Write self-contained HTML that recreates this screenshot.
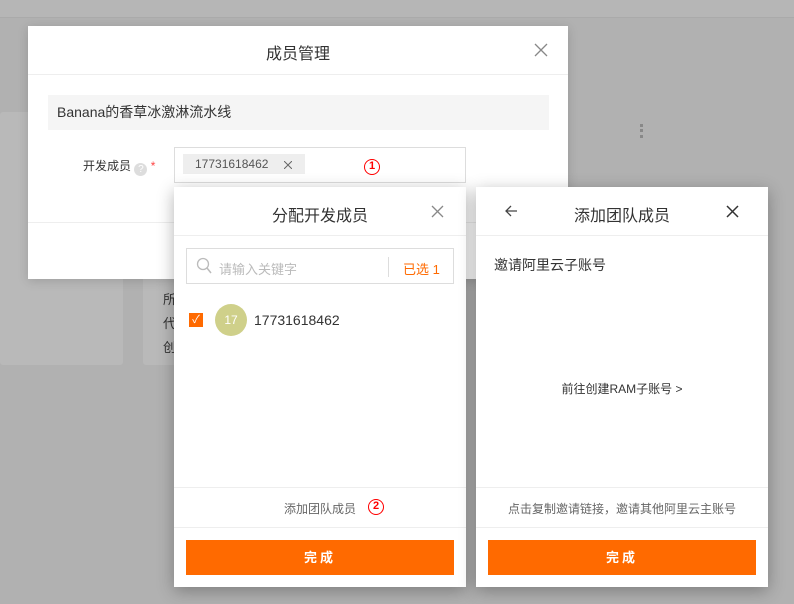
<!DOCTYPE html><html><head><meta charset="utf-8"><style>
*{box-sizing:border-box;margin:0;padding:0}
body{width:794px;height:604px;background:#b1b1b1;font-family:"Liberation Sans","Noto Sans CJK SC",sans-serif;position:relative;overflow:hidden;color:#333}
.a{position:absolute}
.top{left:0;top:0;width:794px;height:18px;background:#b6b6b6;border-bottom:1px solid #aaa}
.card{background:#b9b9b9;border-radius:3px}
.w{background:#fff}
.t{font-size:16px;color:#333}
.line{height:1px;background:#eee}
.btn{background:#ff6a00;color:#fff;font-size:13px;letter-spacing:3px;text-align:center;line-height:35px;font-weight:bold}
.red{color:#f00;border:1.5px solid #f00;border-radius:50%;width:16px;height:16px;font-size:11px;text-align:center;line-height:13px;font-weight:bold}
</style></head><body>
<div class="a top"></div>
<div class="a card" style="left:0;top:112px;width:123px;height:253px"></div>
<div class="a card" style="left:143px;top:112px;width:287px;height:253px"></div>
<div class="a" style="left:163px;top:288px;font-size:13px;line-height:24px;color:#333">所<br>代<br>创</div>
<div class="a" style="left:640px;top:124px;width:3px;height:14px;border-left:3px dotted #888"></div>
<div class="a" style="left:434px;top:235px;width:4px;height:35px;border:1px solid #f0b080;border-left:none"></div>

<div class="a w" style="left:28px;top:26px;width:540px;height:253px;box-shadow:0 2px 10px rgba(0,0,0,.15)">
 <div class="a t" style="left:0;width:540px;top:14px;text-align:center">成员管理</div>
 <svg class="a" style="left:506px;top:17px" width="14" height="14"><path d="M1 1L13 13M13 1L1 13" stroke="#888" stroke-width="1.3"/></svg>
 <div class="a line" style="left:0;top:48px;width:540px"></div>
 <div class="a" style="left:20px;top:69px;width:501px;height:35px;background:#f5f5f5;font-size:14px;line-height:35px;padding-left:9px">Banana的香草冰激淋流水线</div>
 <div class="a" style="left:55px;top:131px;font-size:12px">开发成员 <span style="display:inline-block;width:13px;height:13px;border-radius:50%;background:#ddd;color:#fff;font-size:10px;text-align:center;line-height:13px;vertical-align:-2px">?</span> <span style="color:#f44">*</span></div>
 <div class="a" style="left:146px;top:121px;width:292px;height:36px;border:1px solid #ddd">
  <div class="a" style="left:8px;top:6px;width:122px;height:20px;background:#eee;font-size:12px;line-height:20px;padding-left:12px;color:#555">17731618462</div>
  <svg class="a" style="left:109px;top:13px" width="8" height="8"><path d="M0 0L8 8M8 0L0 8" stroke="#666" stroke-width="1"/></svg>
  <div class="a red" style="left:189px;top:11px">1</div>
 </div>
 <div class="a line" style="left:0;top:196px;width:540px"></div>
</div>

<div class="a w" style="left:174px;top:187px;width:292px;height:400px;box-shadow:0 4px 16px rgba(0,0,0,.3)">
 <div class="a t" style="left:0;width:292px;top:15px;text-align:center">分配开发成员</div>
 <svg class="a" style="left:257px;top:18px" width="13" height="13"><path d="M1 1L12 12M12 1L1 12" stroke="#888" stroke-width="1.3"/></svg>
 <div class="a line" style="left:0;top:48px;width:292px"></div>
 <div class="a" style="left:12px;top:61px;width:268px;height:36px;border:1px solid #ddd">
  <svg class="a" style="left:9px;top:8px" width="16" height="18" viewBox="0 0 16 18"><circle cx="7" cy="7" r="5.5" fill="none" stroke="#bbb" stroke-width="1.3"/><path d="M11 11l4 5" stroke="#bbb" stroke-width="1.5"/></svg>
  <div class="a" style="left:32px;top:10px;font-size:13px;color:#bbb">请输入关键字</div>
  <div class="a" style="left:201px;top:8px;width:1px;height:20px;background:#ddd"></div>
  <div class="a" style="left:216px;top:10px;font-size:13px;color:#ff6a00">已选 1</div>
 </div>
 <div class="a" style="left:15px;top:126px;width:14px;height:14px;background:#ff6a00;color:#fff;font-size:11px;text-align:center;line-height:14px">✓</div>
 <div class="a" style="left:41px;top:117px;width:32px;height:32px;border-radius:50%;background:#cfd08a;color:#fff;font-size:12px;text-align:center;line-height:32px">17</div>
 <div class="a" style="left:80px;top:125px;font-size:14px">17731618462</div>
 <div class="a line" style="left:0;top:300px;width:292px"></div>
 <div class="a" style="left:110px;top:313px;font-size:12px;color:#666">添加团队成员</div>
 <div class="a red" style="left:194px;top:312px">2</div>
 <div class="a line" style="left:0;top:340px;width:292px"></div>
 <div class="a btn" style="left:12px;top:353px;width:268px;height:35px">完成</div>
</div>

<div class="a w" style="left:476px;top:187px;width:292px;height:400px;box-shadow:0 4px 16px rgba(0,0,0,.3)">
 <svg class="a" style="left:29px;top:18px" width="13" height="12"><path d="M12 6H1M6 1L1 6L6 11" stroke="#444" stroke-width="1.3" fill="none"/></svg>
 <div class="a t" style="left:0;width:292px;top:15px;text-align:center">添加团队成员</div>
 <svg class="a" style="left:250px;top:18px" width="13" height="13"><path d="M1 1L12 12M12 1L1 12" stroke="#333" stroke-width="1.5"/></svg>
 <div class="a line" style="left:0;top:48px;width:292px"></div>
 <div class="a" style="left:18px;top:68px;font-size:14px">邀请阿里云子账号</div>
 <div class="a" style="left:0;width:292px;top:193px;text-align:center;font-size:12px">前往创建RAM子账号 &gt;</div>
 <div class="a line" style="left:0;top:300px;width:292px"></div>
 <div class="a" style="left:0;width:292px;top:313px;text-align:center;font-size:12px;color:#666">点击复制邀请链接，邀请其他阿里云主账号</div>
 <div class="a line" style="left:0;top:340px;width:292px"></div>
 <div class="a btn" style="left:12px;top:353px;width:268px;height:35px">完成</div>
</div>
</body></html>
